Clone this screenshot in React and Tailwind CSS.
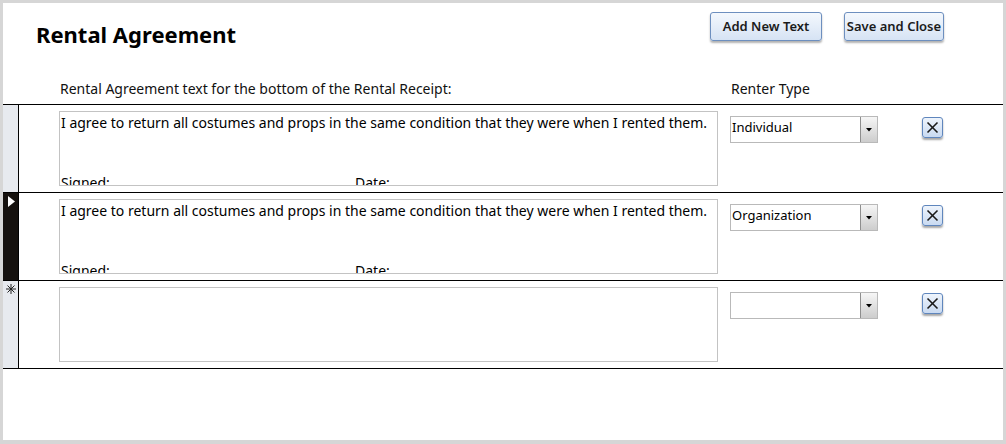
const rows = [
  { id: 1, text: true, renter: 'Individual', state: 'normal' },
  { id: 2, text: true, renter: 'Organization', state: 'current' },
  { id: 3, text: false, renter: '', state: 'new' },
];

function Selector({ state }) {
  if (state === 'current') {
    return (
      <div className="w-[15px] shrink-0 bg-[#15110e] pt-[3px] pl-[5px]">
        <svg width="7" height="11" viewBox="0 0 7 11">
          <polygon points="0,0 7,5.5 0,11" fill="#fff" />
        </svg>
      </div>
    );
  }
  return (
    <div className="w-[15px] shrink-0 bg-[#e7eaef] pt-[3px] pl-[3px]">
      {state === 'new' && (
        <svg width="10" height="10" viewBox="0 0 10 10" stroke="#222" strokeWidth="1">
          <line x1="5" y1="0" x2="5" y2="10" />
          <line x1="0" y1="5" x2="10" y2="5" />
          <line x1="1.5" y1="1.5" x2="8.5" y2="8.5" />
          <line x1="8.5" y1="1.5" x2="1.5" y2="8.5" />
        </svg>
      )}
    </div>
  );
}

function Combo({ value }) {
  return (
    <div className="flex w-[148px] h-[27px] border border-[#b9b9b9] bg-white">
      <div className="flex-1 pl-[1px] pt-[2px] text-[13px] leading-[16px] text-black">{value}</div>
      <div className="w-[17px] flex items-center justify-center border-l border-[#8e8e8e] bg-gradient-to-b from-[#f6f6f6] to-[#cdcdcd]">
        <svg width="6" height="4" viewBox="0 0 6 4">
          <polygon points="0,0 6,0 3,3.5" fill="#000" />
        </svg>
      </div>
    </div>
  );
}

function DeleteButton() {
  return (
    <button className="w-[21px] h-[21px] rounded-[3px] border border-[#5f86bd] bg-gradient-to-b from-[#eef4fc] to-[#c9daf1] shadow-[0_2px_2px_rgba(0,0,0,0.35)] flex items-center justify-center">
      <svg width="13" height="13" viewBox="0 0 13 13" stroke="#1a1a1a" strokeWidth="1.6">
        <line x1="1.5" y1="1.5" x2="11.5" y2="11.5" />
        <line x1="11.5" y1="1.5" x2="1.5" y2="11.5" />
      </svg>
    </button>
  );
}

function Row({ row }) {
  return (
    <div className="flex h-[88px] border-b border-black">
      <Selector state={row.state} />
      <div className="flex flex-1 border-l border-black pl-[40px] pt-[6px]">
        <div className="w-[659px] h-[75px] border border-[#c3c3c3] overflow-hidden px-[1px] pt-[1px] text-[14px] leading-[20px] text-black">
          {row.text && (
            <>
              <div>I agree to return all costumes and props in the same condition that they were when I rented them.</div>
              <div className="h-[40px]" />
              <div className="flex">
                <span className="w-[294px]">Signed:</span>
                <span>Date:</span>
              </div>
            </>
          )}
        </div>
        <div className="ml-[12px] pt-[5px]">
          <Combo value={row.renter} />
        </div>
        <div className="ml-[44px] pt-[6px]">
          <DeleteButton />
        </div>
      </div>
    </div>
  );
}

export default function App() {
  return (
    <div className="w-[1006px] h-[444px] bg-[#d6d6d6] pt-[3px] px-[3px] pb-[4px] font-['Noto_Sans',sans-serif]">
      <div className="h-full bg-white flex flex-col">
        <div className="h-[102px] border-b border-black flex flex-col">
          <div className="flex">
            <h1 className="pl-[33px] pt-[16px] text-[22px] leading-[30px] font-bold text-black">Rental Agreement</h1>
            <div className="ml-auto mr-[59px] pt-[9px] flex gap-[22px]">
              <button className="h-[29px] w-[112px] rounded-[3px] border border-[#6d8fbf] bg-gradient-to-b from-[#f4f8fd] to-[#d6e3f4] shadow-[0_2px_2px_rgba(0,0,0,0.3)] text-[13px] font-semibold text-[#1b1b1b]">Add New Text</button>
              <button className="h-[29px] w-[100px] rounded-[3px] border border-[#6d8fbf] bg-gradient-to-b from-[#f4f8fd] to-[#d6e3f4] shadow-[0_2px_2px_rgba(0,0,0,0.3)] text-[13px] font-semibold text-[#1b1b1b]">Save and Close</button>
            </div>
          </div>
          <div className="flex mt-auto pb-[5px] text-[14px] leading-[20px] text-[#111]">
            <div className="pl-[57px] w-[728px]">Rental Agreement text for the bottom of the Rental Receipt:</div>
            <div>Renter Type</div>
          </div>
        </div>
        {rows.map((row) => (
          <Row key={row.id} row={row} />
        ))}
      </div>
    </div>
  );
}
